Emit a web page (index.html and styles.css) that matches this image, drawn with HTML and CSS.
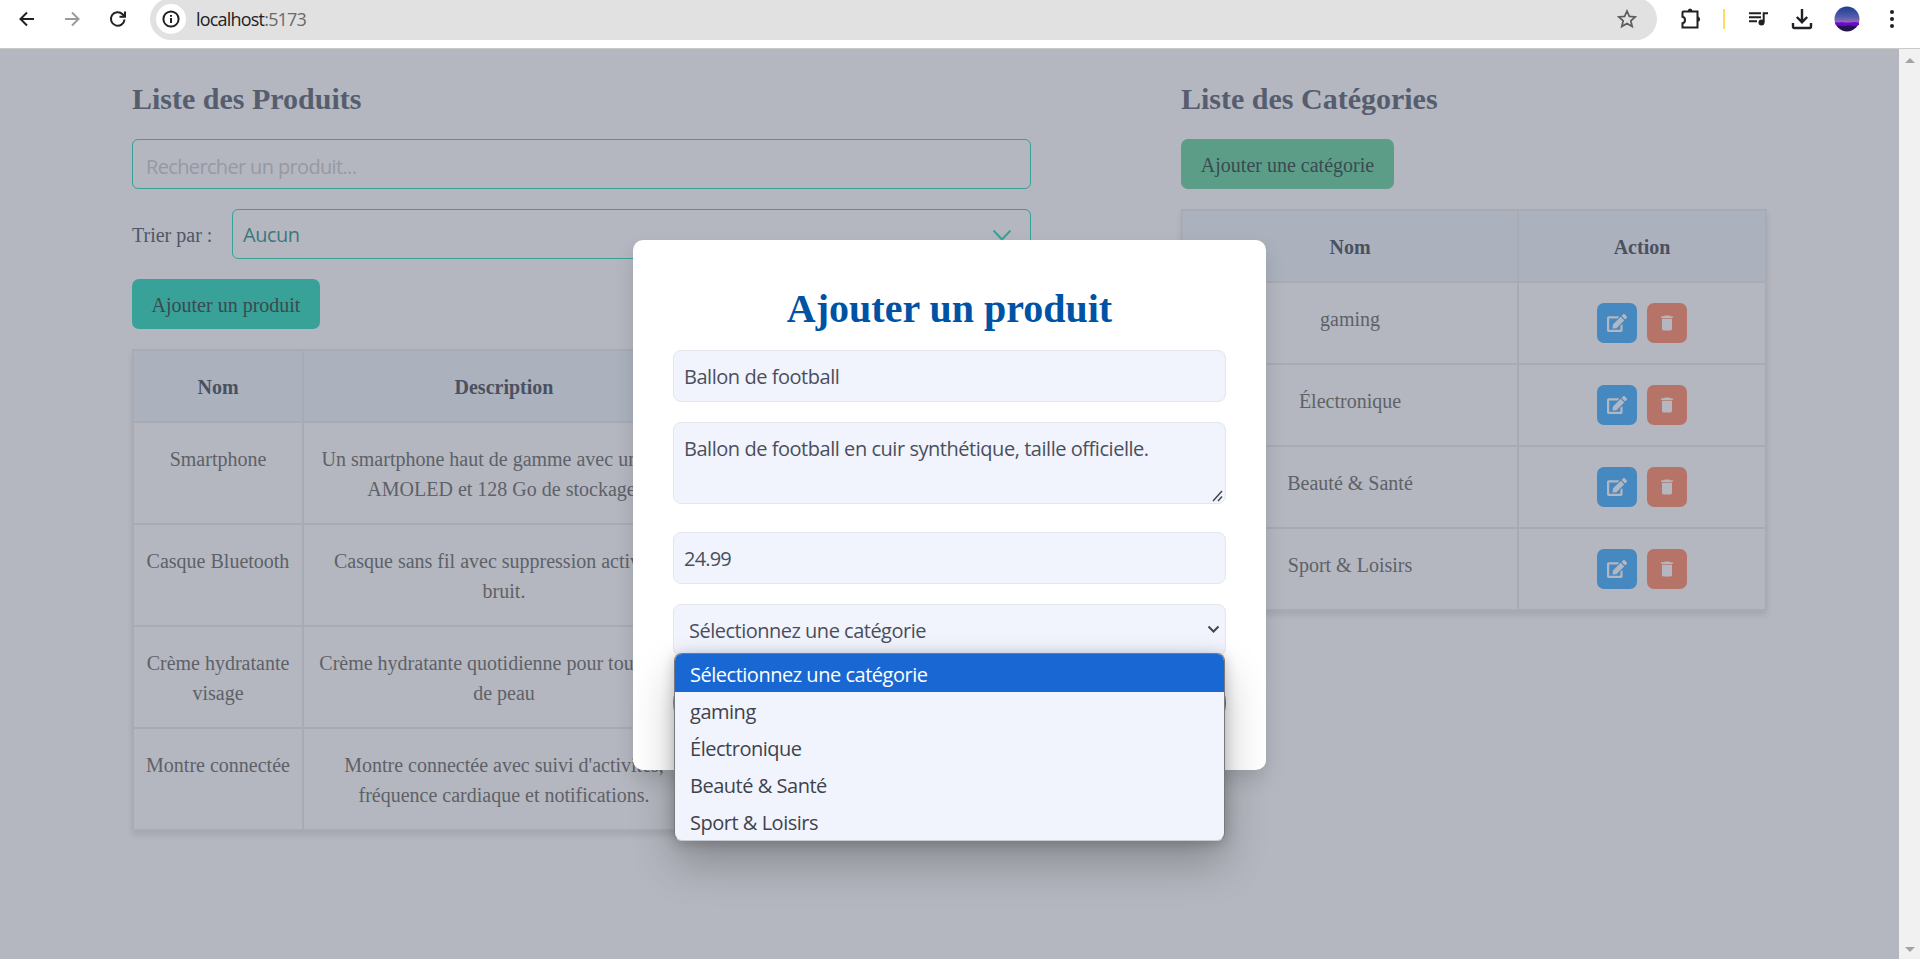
FILE: index.html
```html
<!DOCTYPE html>
<html lang="fr">
<head>
<meta charset="utf-8">
<title>Produits</title>
<link rel="stylesheet" href="styles.css">
</head>
<body>
<svg class="defs" aria-hidden="true">
  <symbol id="edit" viewBox="0 0 576 512"><path d="M402.600 83.200l90.200 90.200c3.800 3.800 3.800 10 0 13.800L274.400 405.600l-92.800 10.300c-12.400 1.400-22.900-9.100-21.500-21.500l10.300-92.800L388.800 83.200c3.800-3.800 10-3.800 13.800 0zm162-22.900l-48.800-48.800c-15.200-15.200-39.900-15.200-55.200 0l-35.400 35.400c-3.800 3.800-3.800 10 0 13.800l90.200 90.200c3.800 3.800 10 3.800 13.800 0l35.400-35.400c15.200-15.300 15.200-40 0-55.200zM384 346.200V448H64V128h229.800c3.200 0 6.200-1.300 8.500-3.500l40-40c7.600-7.600 2.200-20.500-8.500-20.500H48C21.500 64 0 85.500 0 112v352c0 26.500 21.500 48 48 48h352c26.500 0 48-21.500 48-48V306.200c0-10.700-12.900-16-20.500-8.500l-40 40c-2.200 2.300-3.500 5.300-3.500 8.500z"/></symbol>
  <symbol id="trash" viewBox="0 0 24 24"><path d="M6 19c0 1.100.9 2 2 2h8c1.100 0 2-.9 2-2V7H6v12zM19 4h-3.500l-1-1h-5l-1 1H5v2h14V4z"/></symbol>
</svg>

<header class="toolbar">
  <nav class="nav">
    <svg width="16" height="16" viewBox="0 0 16 16"><path d="M15 8H2M8 1.500L1.500 8L8 14.500"/></svg>
    <svg class="faded" width="16" height="16" viewBox="0 0 16 16"><path d="M1 8H14M8 1.500L14.500 8L8 14.500"/></svg>
    <svg width="18" height="18" viewBox="0 0 18 18"><path d="M15.500 9.500A6.800 6.800 0 1 1 13.600 4.200L15.500 6.200M16 1.500V6.700H10.500"/></svg>
  </nav>
  <div class="url">
    <span class="info"><svg width="18" height="18" viewBox="0 0 18 18"><circle cx="9" cy="9" r="7.600"/><path d="M9 8V13M9 5V6.800"/></svg></span>
    <span class="host">localhost<span class="port">:5173</span></span>
    <svg class="star" width="20" height="20" viewBox="0 0 20 20"><path d="M10 2l2.400 5.400 5.900.5-4.500 3.900 1.400 5.800L10 14.500l-5.200 3.100 1.400-5.800L1.700 7.900l5.900-.5z"/></svg>
  </div>
  <div class="tools">
    <svg class="puzzle" width="22" height="22" viewBox="0 0 22 22"><path d="M3.500 3.500H17.500V19.500H2.500V15.200C4.300 15 5 13.500 5 12S4.300 9 2.500 8.800V4.500Q2.500 3.500 3.500 3.500Z"/><path class="solid" d="M7.800 3a2.300 2.500 0 0 1 4.600 0zM18 8.500a2.600 2.700 0 0 1 0 5.300z"/></svg>
    <i class="sep"></i>
    <svg class="music" width="20" height="16" viewBox="0 0 20 16"><path d="M0 2.300H12M0 6.300H12M0 10.300H8M14.700 11V2.300H19"/><circle class="solid" cx="12.500" cy="11.500" r="3"/></svg>
    <svg class="down" width="22" height="22" viewBox="0 0 22 22"><path d="M11 1V14M5.800 9L11 14.200L16.200 9M2 15V18.500Q2 20 3.500 20H18.500Q20 20 20 18.500V15"/></svg>
    <svg class="avatar" width="26" height="26" viewBox="0 0 26 26"><defs><linearGradient id="sky" x2="0" y2="1"><stop offset="0" stop-color="#1e3d8c"/><stop offset=".4" stop-color="#4f5cab"/><stop offset=".62" stop-color="#9b68b5"/><stop offset=".66" stop-color="#6d10c9"/><stop offset=".78" stop-color="#3c0a84"/><stop offset=".82" stop-color="#21154a"/><stop offset="1" stop-color="#21154a"/></linearGradient></defs><circle cx="13" cy="13" r="12.500" fill="url(#sky)"/><path d="M1 16l4 1 3-1 4 2 4-1 4-1 5 1v2l-4 1-6-1-5 1-8-1z" fill="#6a0bd0"/></svg>
    <svg class="dots" width="6" height="20" viewBox="0 0 6 20"><circle cx="3" cy="3" r="2"/><circle cx="3" cy="10" r="2"/><circle cx="3" cy="17" r="2"/></svg>
  </div>
</header>

<div class="viewport">
  <main class="page">
    <section class="products">
      <h2>Liste des Produits</h2>
      <div class="search">Rechercher un produit...</div>
      <div class="sort">
        <label>Trier par :</label>
        <div class="sort-select"><span>Aucun</span><svg width="20" height="12" viewBox="0 0 20 12"><path d="M1.500 1.500L10 10.500L18.500 1.500"/></svg></div>
      </div>
      <button class="btn teal">Ajouter un produit</button>
      <table class="grid">
        <colgroup><col class="c-name"><col class="c-desc"><col></colgroup>
        <thead><tr><th>Nom</th><th>Description</th><th></th></tr></thead>
        <tbody>
          <tr><td>Smartphone</td><td>Un smartphone haut de gamme avec un écran<br>AMOLED et 128 Go de stockage.</td><td></td></tr>
          <tr><td>Casque Bluetooth</td><td>Casque sans fil avec suppression active du<br>bruit.</td><td></td></tr>
          <tr><td>Crème hydratante<br>visage</td><td>Crème hydratante quotidienne pour tous types<br>de peau</td><td></td></tr>
          <tr><td>Montre connectée</td><td>Montre connectée avec suivi d'activités,<br>fréquence cardiaque et notifications.</td><td></td></tr>
        </tbody>
      </table>
    </section>
    <section class="categories">
      <h2>Liste des Catégories</h2>
      <button class="btn green">Ajouter une catégorie</button>
      <table class="grid">
        <colgroup><col class="c-cat"><col></colgroup>
        <thead><tr><th>Nom</th><th>Action</th></tr></thead>
        <tbody>
          <tr><td>gaming</td><td><div class="actions"><span class="edit"><svg><use href="#edit"/></svg></span><span class="del"><svg><use href="#trash"/></svg></span></div></td></tr>
          <tr><td>Électronique</td><td><div class="actions"><span class="edit"><svg><use href="#edit"/></svg></span><span class="del"><svg><use href="#trash"/></svg></span></div></td></tr>
          <tr><td>Beauté &amp; Santé</td><td><div class="actions"><span class="edit"><svg><use href="#edit"/></svg></span><span class="del"><svg><use href="#trash"/></svg></span></div></td></tr>
          <tr><td>Sport &amp; Loisirs</td><td><div class="actions"><span class="edit"><svg><use href="#edit"/></svg></span><span class="del"><svg><use href="#trash"/></svg></span></div></td></tr>
        </tbody>
      </table>
    </section>
  </main>
  <aside class="scrollbar"><i class="up"></i><i class="dn"></i></aside>

  <div class="modal">
    <h1>Ajouter un produit</h1>
    <div class="field">Ballon de football</div>
    <div class="field area">Ballon de football en cuir synthétique, taille officielle.<svg class="grip" width="12" height="12" viewBox="0 0 12 12"><path d="M1 11L10 1M6 11L10 6.500"/></svg></div>
    <div class="field price">24.99</div>
    <div class="select-wrap">
      <div class="field select">Sélectionnez une catégorie<svg width="13" height="9" viewBox="0 0 13 9"><path d="M1.500 1.500L6.500 6.500L11.500 1.500"/></svg></div>
      <ul class="options">
        <li class="active">Sélectionnez une catégorie</li>
        <li>gaming</li>
        <li>Électronique</li>
        <li>Beauté &amp; Santé</li>
        <li>Sport &amp; Loisirs</li>
      </ul>
    </div>
    <div class="footer"><span class="cancel"></span><span class="submit"></span></div>
  </div>
</div>
</body>
</html>
```
FILE: styles.css
```css
* { box-sizing: border-box; }
html, body { height: 100%; }
body { margin: 0; display: flex; flex-direction: column; overflow: hidden; background: #b4b7bf; font: 20px/30px "Liberation Serif", serif; }
.defs { display: none; }
h1, h2, ul { margin: 0; padding: 0; }

.toolbar { display: flex; height: 49px; flex: none; background: #fff; border-bottom: 1px solid #c8cbc9; }
.toolbar svg { fill: none; stroke: #1f2124; stroke-width: 2; flex: none; }
.nav { width: 150px; height: 38px; padding-left: 19px; display: flex; align-items: center; gap: 29px; }
.nav .faded { stroke: #9b9b9b; }
.url { width: 1507px; height: 42px; margin-top: -2px; padding: 0 20px 0 6px; border-radius: 21px; background: #e1e1e1; display: flex; align-items: center; }
.info { width: 30px; height: 30px; border-radius: 50%; background: #fff; display: grid; place-items: center; }
.host { flex: 1; margin-left: 10px; font: 18px/26px "Open Sans", sans-serif; letter-spacing: -.8px; color: #1f2124; }
.port { color: #6a6a6a; }
.toolbar .star { stroke: #5c5c5c; stroke-width: 1.700; }
.tools { height: 38px; display: flex; align-items: center; }
.toolbar .solid { fill: #1f2124; stroke: none; }
.puzzle { margin-left: 23px; }
.sep { width: 2px; height: 20px; background: #ffdc5f; margin-left: 21px; }
.music { margin-left: 24px; }
.toolbar .down { margin-left: 22px; stroke-width: 2.400; }
.toolbar .avatar { margin-left: 21px; stroke: none; }
.toolbar .dots { margin-left: 29px; fill: #1f2124; stroke: none; }

.viewport { position: relative; flex: 1; min-height: 0; display: flex; }
.page { flex: 1; display: flex; gap: 150px; padding: 30px 0 0 132px; }
.products { width: 899px; }
.categories { width: 586px; }
h2 { font-size: 30px; line-height: 40px; color: #565d6e; margin-bottom: 20px; }
.search { height: 50px; border: 1px solid #38a198; border-radius: 6px; padding: 12px 13px; font: 20px/30px "Open Sans", sans-serif; letter-spacing: -.65px; color: #9699a4; }
.sort { display: flex; align-items: center; margin: 20px 0; color: #4f5668; }
.sort label { width: 100px; padding-top: 1px; }
.sort-select { flex: 1; height: 50px; border: 1px solid #38a198; border-radius: 6px; padding: 1px 18px 0 10px; display: flex; align-items: center; justify-content: space-between; font-family: "Open Sans", sans-serif; letter-spacing: -.5px; color: #3c7780; }
.sort-select svg { fill: none; stroke: #38a198; stroke-width: 2; }
.btn { display: block; height: 50px; border: 0; border-radius: 7px; padding: 1px 0 0; font: 20px/30px "Liberation Serif", serif; color: #3a4a50; }
.teal { width: 188px; background: #38a198; }
.green { width: 213px; background: #5c9d88; }
.grid { width: 100%; margin-top: 20px; table-layout: fixed; border-collapse: separate; border-spacing: 0; border: solid #a8abb4; border-width: 2px 0 0 2px; box-shadow: 0 4px 6px rgba(0,0,0,.09); }
.grid th, .grid td { border: solid #a8abb4; border-width: 0 2px 2px 0; padding: 21px 0 19px; text-align: center; vertical-align: top; line-height: 30px; white-space: nowrap; }
.grid th { background: #abb2be; color: #4b5060; }
.grid td { color: #5e6168; }
.c-name { width: 170px; }
.c-desc { width: 402px; }
.c-cat { width: 336px; }
.actions { display: flex; justify-content: center; gap: 10px; margin: -1px 0 1px; }
.actions span { width: 40px; height: 40px; border-radius: 7px; display: grid; place-items: center; fill: #b4b7bf; }
.actions svg { width: 20px; height: 20px; }
.edit { background: #4688c0; }
.del { background: #b67468; }

.scrollbar { width: 21px; background: #f1f1f1; display: flex; flex-direction: column; justify-content: space-between; align-items: center; padding: 9px 0 7px; }
.scrollbar i { border: 5px solid transparent; }
.scrollbar .up { border-top: 0; border-bottom-color: #a3a3a3; }
.scrollbar .dn { border-bottom: 0; border-top-color: #a3a3a3; }

/* Dialog floating above the page */
.modal { position: absolute; left: 633px; top: 191px; width: 633px; height: 530px; padding: 40px; border-radius: 10px; background: #fff; box-shadow: 0 10px 20px rgba(0,0,0,.13); }
.modal h1 { font-size: 40px; line-height: 56px; text-align: center; color: #0053a4; padding-top: 1px; margin-bottom: 13px; }
.field { position: relative; height: 52px; border: 1px solid #e3e6ec; border-radius: 8px; background: #f1f4fd; padding: 11px 10px; font: 20px/30px "Open Sans", sans-serif; letter-spacing: -.46px; color: #4b4f5c; margin-bottom: 20px; white-space: nowrap; }
.area { height: 82px; margin-bottom: 28px; }
.price { letter-spacing: -.8px; }
.field svg { fill: none; stroke: #42454f; stroke-width: 1.500; }
.grip { position: absolute; right: 1px; bottom: 1px; }
.select-wrap { position: relative; }
.select { padding: 12px 5px 10px 15px; display: flex; align-items: center; justify-content: space-between; letter-spacing: -.5px; }
.field.select svg { stroke-width: 2; margin-top: -4px; }
.options { position: absolute; z-index: 2; left: 1px; right: 1px; top: 49px; height: 188px; border: 1px solid #777a7c; border-color: #777a7c #777a7c #c9ccd2; border-radius: 8px; overflow: hidden; background: #f1f4fd; list-style: none; font: 20px/37px "Open Sans", sans-serif; letter-spacing: -.48px; color: #3f434c; box-shadow: 0 22px 44px rgba(0,0,0,.24), 0 2px 14px rgba(0,0,0,.22); }
.options li { height: 37px; padding: 2px 15px 0; line-height: 36px; }
.options .active { height: 38px; padding-top: 3px; background: #1967d2; color: #fff; }
.footer { display: flex; justify-content: space-between; }
.footer span { width: 250px; height: 54px; border-radius: 26px; }
.cancel { background: #ff7151; }
.submit { background: #1194ff; }
```
